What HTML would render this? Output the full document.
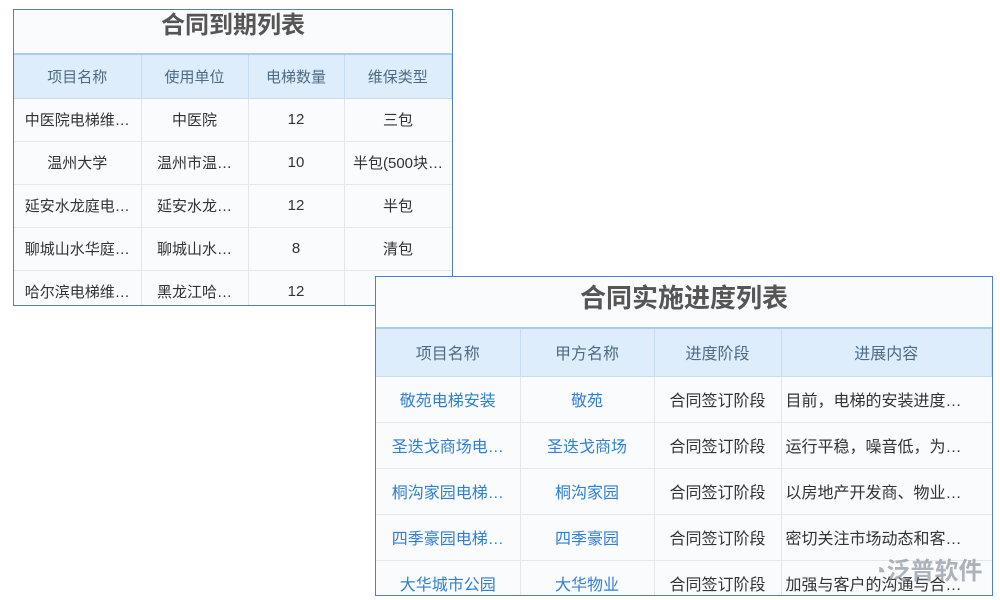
<!DOCTYPE html><html><head><meta charset="utf-8"><style>
body{margin:0;width:1000px;height:600px;background:#fff;position:relative;overflow:hidden;font-family:"Liberation Sans","Noto Sans CJK SC",sans-serif}
.b{position:absolute;border:1px solid #4a7fd6;background:#fafbfc;overflow:hidden;box-sizing:border-box}
.t{text-align:center;font-weight:bold;color:#555;border-bottom:2px solid #a9cdee;box-sizing:border-box}
table{border-collapse:collapse;table-layout:fixed;width:100%}
td{border-right:1px solid #e6e6e6;border-bottom:1px solid #e8e8e8;text-align:center;white-space:nowrap;overflow:hidden;padding:0 4px;color:#333}
td:last-child{border-right:none}
tr.h td{background:#deedfb;color:#4d6b86;border-right:1px solid #c8dcef;border-bottom:1px solid #c8dcef}
.l{color:#2f7fd6}
</style></head><body>
<div class="b" style="left:13px;top:9px;width:440px;height:297px">
<div class="t" style="height:45px;line-height:32px;font-size:24px">合同到期列表</div>
<table style="font-size:15px">
<colgroup><col style="width:127px"><col style="width:107px"><col style="width:96px"><col></colgroup>
<tr class="h" style="height:43px"><td>项目名称</td><td>使用单位</td><td>电梯数量</td><td>维保类型</td></tr>
<tr style="height:43px"><td>中医院电梯维…</td><td>中医院</td><td>12</td><td>三包</td></tr>
<tr style="height:43px"><td>温州大学</td><td>温州市温…</td><td>10</td><td>半包(500块…</td></tr>
<tr style="height:43px"><td>延安水龙庭电…</td><td>延安水龙…</td><td>12</td><td>半包</td></tr>
<tr style="height:43px"><td>聊城山水华庭…</td><td>聊城山水…</td><td>8</td><td>清包</td></tr>
<tr style="height:43px"><td>哈尔滨电梯维…</td><td>黑龙江哈…</td><td>12</td><td></td></tr>
</table></div>
<div class="b" style="left:375px;top:276px;width:618px;height:320px">
<div class="t" style="height:52px;line-height:42px;font-size:26px">合同实施进度列表</div>
<table style="font-size:16px">
<colgroup><col style="width:144px"><col style="width:134px"><col style="width:127px"><col></colgroup>
<tr class="h" style="height:47px"><td>项目名称</td><td>甲方名称</td><td>进度阶段</td><td>进展内容</td></tr>
<tr style="height:46px"><td class="l">敬苑电梯安装</td><td class="l">敬苑</td><td>合同签订阶段</td><td style="text-align:left">目前，电梯的安装进度…</td></tr>
<tr style="height:46px"><td class="l">圣迭戈商场电…</td><td class="l">圣迭戈商场</td><td>合同签订阶段</td><td style="text-align:left">运行平稳，噪音低，为…</td></tr>
<tr style="height:46px"><td class="l">桐沟家园电梯…</td><td class="l">桐沟家园</td><td>合同签订阶段</td><td style="text-align:left">以房地产开发商、物业…</td></tr>
<tr style="height:46px"><td class="l">四季豪园电梯…</td><td class="l">四季豪园</td><td>合同签订阶段</td><td style="text-align:left">密切关注市场动态和客…</td></tr>
<tr style="height:46px"><td class="l">大华城市公园</td><td class="l">大华物业</td><td>合同签订阶段</td><td style="text-align:left">加强与客户的沟通与合…</td></tr>
</table>
<div style="position:absolute;left:496px;top:274px;font-size:24px;color:rgba(110,120,135,.55);font-weight:bold">◔泛普软件</div>
</div>
</body></html>
